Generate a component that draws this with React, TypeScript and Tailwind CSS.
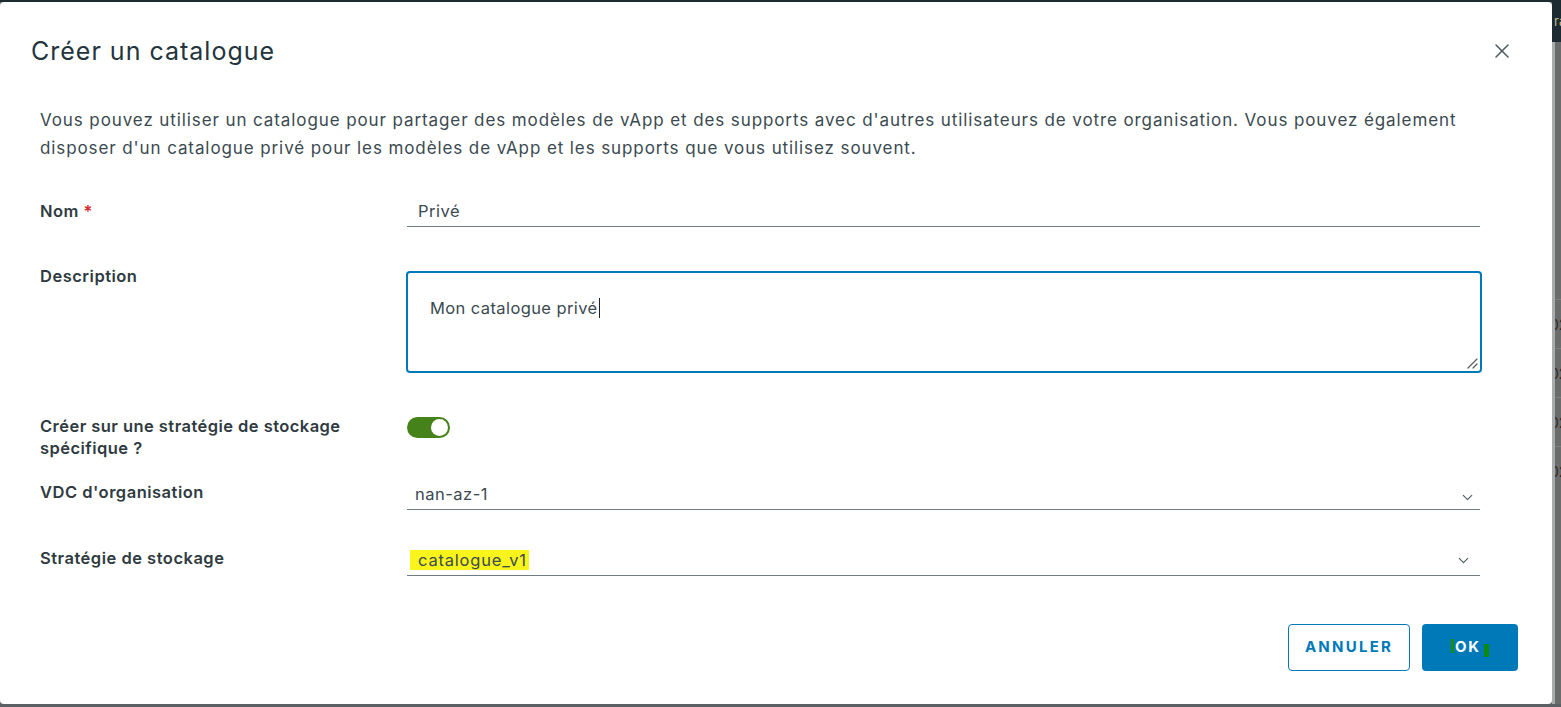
import { X, ChevronDown } from 'lucide-react';

const font = { fontFamily: 'Inter, "Open Sans", sans-serif' };

function FieldLabel({ children, className = '' }: { children: React.ReactNode; className?: string }) {
  return <div className={`text-[16.5px] font-semibold leading-6 tracking-[0.5px] text-[#2f3b41] ${className}`}>{children}</div>;
}

function SelectField({ children, chevronClass }: { children: React.ReactNode; chevronClass: string }) {
  return (
    <div className="flex h-[31px] items-center justify-between border-b border-[#6f7c83]">
      <div className="flex items-center">{children}</div>
      <ChevronDown className={chevronClass} size={17} strokeWidth={1.6} />
    </div>
  );
}

function BackdropStrip() {
  return (
    <div className="flex w-[9px] flex-col">
      <div className="flex h-[40px] items-center overflow-hidden bg-[#1c2a31] pl-[2px] text-[13px] text-[#c9b894]">ra</div>
      <div className="flex flex-1 overflow-hidden border-l-[3px] border-[#a9acad] bg-[#6b6b6b]">
        <div className="flex w-full flex-col pt-[257px]">
          {[0, 1, 2, 3].map((i) => (
            <div key={i} className="flex h-[49px] items-center overflow-hidden border-t border-[#7d7d7d] text-[14px] text-[#2a2a2a]">
              <span className="-ml-[5px]">02</span>
            </div>
          ))}
        </div>
      </div>
    </div>
  );
}

export default function App() {
  return (
    <div className="flex h-[707px] w-[1561px] flex-col overflow-hidden bg-[#6b6b6b]" style={font}>
      <div className="h-[2px] bg-[#1c2a31]" />
      <div className="flex flex-1">
        <div className="flex h-[702px] w-[1552px] flex-col rounded-[4px] bg-white">
          <header className="flex items-center justify-between pl-[31px] pr-[38px] pt-[33px]">
            <h1 className="text-[25px] font-normal leading-8 tracking-[1px] text-[#23343c]">Créer un catalogue</h1>
            <X size={24} strokeWidth={1.5} className="text-[#4b5a61]" />
          </header>

          <div className="pl-[40px] pr-[72px]">
            <p className="mt-[39px] text-[17px] leading-7 tracking-[0.9px] text-[#3b4a51]">
              Vous pouvez utiliser un catalogue pour partager des modèles de vApp et des supports avec d'autres utilisateurs de votre organisation. Vous pouvez également
              <br />
              disposer d'un catalogue privé pour les modèles de vApp et les supports que vous utilisez souvent.
            </p>

            <div className="mt-[35px] grid grid-cols-[367px_1fr] items-start">
              <FieldLabel className="pt-[2px]">
                Nom <span className="text-[#d6282c]">*</span>
              </FieldLabel>
              <div className="flex h-[30px] items-center border-b border-[#6f7c83] pl-[11px] text-[16.5px] tracking-[0.5px] text-[#3b4a51]">Privé</div>
            </div>

            <div className="mt-[37px] grid grid-cols-[367px_1fr] items-start">
              <FieldLabel>Description</FieldLabel>
              <div className="relative -mr-[2px] -ml-[1px] mt-[7px] h-[102px] rounded-[4px] border-2 border-[#0079b8] pl-[22px] pt-[21px]">
                <span className="text-[16.5px] leading-6 tracking-[0.4px] text-[#3b4a51]">Mon catalogue privé</span>
                <span className="ml-px inline-block h-[20px] w-px translate-y-[4px] bg-[#222]" />
                <svg className="absolute bottom-[2px] right-[2px]" width="12" height="12" viewBox="0 0 12 12">
                  <path d="M11 2 L2 11 M11 7 L7 11" stroke="#5b5b5b" strokeWidth="1.2" strokeLinecap="round" />
                </svg>
              </div>
            </div>

            <div className="mt-[42px] grid grid-cols-[367px_1fr] items-start">
              <div className="text-[16.5px] font-semibold leading-[22px] tracking-[0.45px] text-[#2f3b41]">
                Créer sur une stratégie de stockage
                <br />
                spécifique ?
              </div>
              <div className="mt-[2px] flex h-[21px] w-[43px] items-center justify-end rounded-full bg-[#45821a] pr-[2px]">
                <div className="size-[17px] rounded-full bg-white" />
              </div>
            </div>

            <div className="mt-[20px] grid grid-cols-[367px_1fr] items-start">
              <FieldLabel className="pt-px">VDC d'organisation</FieldLabel>
              <SelectField chevronClass="mr-[4px] mt-[6px] text-[#4b5a61]">
                <span className="pl-[8px] text-[16.5px] tracking-[0.5px] text-[#3b4a51]">nan-az-1</span>
              </SelectField>
            </div>

            <div className="mt-[35px] grid grid-cols-[367px_1fr] items-start">
              <FieldLabel className="pt-px">Stratégie de stockage</FieldLabel>
              <SelectField chevronClass="mr-[8px] text-[#4b5a61]">
                <span className="ml-[3px] bg-[#f9f51a] pl-[8px] pr-[2px] text-[16.5px] leading-5 tracking-[0.8px] text-[#3b4a51]">catalogue_v1</span>
              </SelectField>
            </div>
          </div>

          <footer className="mt-[48px] flex justify-end gap-[12px] pr-[34px]">
            <button className="h-[47px] w-[122px] rounded-[4px] border border-[#0079b8] bg-white text-[15px] font-bold tracking-[0.15em] text-[#0079b8]">
              ANNULER
            </button>
            <button className="flex h-[47px] w-[96px] items-center justify-center rounded-[4px] bg-[#0079b8] text-[15px] font-bold tracking-[0.12em] text-white">
              <span className="mr-px inline-block h-[14px] w-[3px] -translate-y-[2px] bg-[#1f8a12]" />
              OK
              <span className="ml-[3px] inline-block h-[13px] w-[5px] translate-y-[3px] bg-[#0f8a0f]" />
            </button>
          </footer>
        </div>
        <BackdropStrip />
      </div>
      <div className="h-[3px] bg-[#5a6063]" />
    </div>
  );
}
